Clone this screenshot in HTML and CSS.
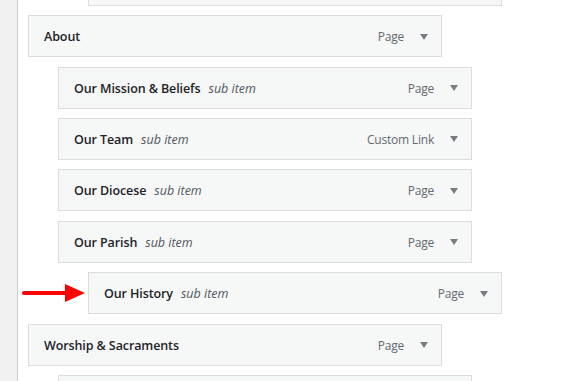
FILE: index.html
```html
<!DOCTYPE html>
<html lang="en">
<head>
  <meta charset="UTF-8" />
  <title>Menu Structure</title>
  <link rel="stylesheet" href="styles.css">
</head>
<body>
  <aside class="sidebar"></aside>
  <main class="menu-area">
    <ul class="menu">
      <li class="item depth-2">
        <div class="handle"></div>
      </li>
      <li class="item depth-0">
        <div class="handle">
          <span class="title">About</span>
          <span class="type">Page</span><span class="toggle"></span>
        </div>
      </li>
      <li class="item depth-1">
        <div class="handle">
          <span class="title">Our Mission &amp; Beliefs</span><span class="sub">sub item</span>
          <span class="type">Page</span><span class="toggle"></span>
        </div>
      </li>
      <li class="item depth-1">
        <div class="handle">
          <span class="title">Our Team</span><span class="sub">sub item</span>
          <span class="type">Custom Link</span><span class="toggle"></span>
        </div>
      </li>
      <li class="item depth-1">
        <div class="handle">
          <span class="title">Our Diocese</span><span class="sub">sub item</span>
          <span class="type">Page</span><span class="toggle"></span>
        </div>
      </li>
      <li class="item depth-1">
        <div class="handle">
          <span class="title">Our Parish</span><span class="sub">sub item</span>
          <span class="type">Page</span><span class="toggle"></span>
        </div>
      </li>
      <li class="item depth-2">
        <div class="handle">
          <span class="pointer"></span>
          <span class="title">Our History</span><span class="sub">sub item</span>
          <span class="type">Page</span><span class="toggle"></span>
        </div>
      </li>
      <li class="item depth-0">
        <div class="handle">
          <span class="title">Worship &amp; Sacraments</span>
          <span class="type">Page</span><span class="toggle"></span>
        </div>
      </li>
      <li class="item depth-1">
        <div class="handle"></div>
      </li>
    </ul>
  </main>
</body>
</html>
```

FILE: styles.css
```css
:root {
  --font-sans: 'Open Sans', 'Noto Sans', sans-serif;
  --box-bg: #f6f7f7;
  --box-border: #dcdcde;
  --text-main: #1d2327;
  --text-muted: #50575e;
  --arrow: #787c82;
}
* { box-sizing: border-box; margin: 0; padding: 0; }
html, body { height: 100%; background: #fff; overflow: hidden; }
body {
  display: flex;
  font-family: var(--font-sans);
  color: var(--text-main);
}
.sidebar {
  width: 18px; flex: none;
  background: #f0f0f0;
  border-right: 1px solid #cbcbcb;
}
.menu-area { flex: 1; padding-left: 10px; }
.menu { list-style: none; margin-top: -45.6px; }
.item { margin-top: 9.4px; }
.depth-1 { padding-left: 30px; }
.depth-2 { padding-left: 60px; }
.handle {
  position: relative;
  display: flex; align-items: center;
  width: 414px; height: 42px;
  padding: 1px 13px 0 15px;
  background: var(--box-bg);
  border: 1px solid var(--box-border);
}
.title { font-size: 12.5px; font-weight: 600; letter-spacing: -0.1px; }
.sub {
  margin-left: 8px;
  font-size: 12.5px; font-style: italic;
  color: var(--text-muted);
}
.type {
  margin-left: auto;
  font-size: 12px;
  letter-spacing: -0.2px;
  color: #646970;
}
.toggle {
  margin-left: 16px;
  width: 0; height: 0;
  border-left: 4px solid transparent;
  border-right: 4px solid transparent;
  border-top: 6px solid var(--arrow);
}
/* red annotation arrow */
.pointer {
  position: absolute;
  right: calc(100% + 4px); top: 50%;
  width: 63px; height: 18px;
  transform: translateY(-50%);
}
.pointer::before {
  content: '';
  position: absolute; left: 0; top: 7px;
  width: 45px; height: 4px;
  background: #f00;
  border-radius: 2px 0 0 2px;
}
.pointer::after {
  content: '';
  position: absolute; right: 0; top: 0;
  border-top: 9px solid transparent;
  border-bottom: 9px solid transparent;
  border-left: 20px solid #f00;
}
```
